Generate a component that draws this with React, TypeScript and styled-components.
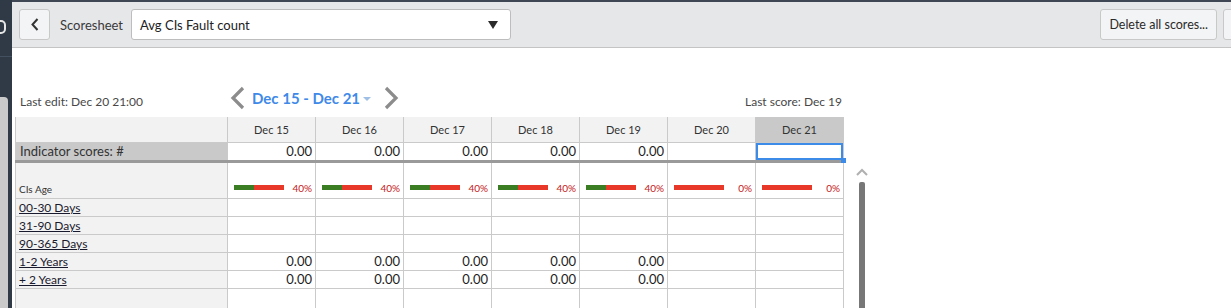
import React from "react";
import styled, { createGlobalStyle } from "styled-components";

const GlobalStyle = createGlobalStyle`
  html, body {
    margin: 0;
    padding: 0;
    background: #ffffff;
    font-family: Lato, "Noto Sans", "Liberation Sans", sans-serif;
    color: #2e2e2e;
  }
`;

const DAYS = ["Dec 15", "Dec 16", "Dec 17", "Dec 18", "Dec 19", "Dec 20", "Dec 21"];
const INDICATOR = ["0.00", "0.00", "0.00", "0.00", "0.00", "", ""];
const PROGRESS = [40, 40, 40, 40, 40, 0, 0];

type Row = { label: string; values: string[] };
const ROWS: Row[] = [
  { label: "00-30 Days", values: ["", "", "", "", "", "", ""] },
  { label: "31-90 Days", values: ["", "", "", "", "", "", ""] },
  { label: "90-365 Days", values: ["", "", "", "", "", "", ""] },
  { label: "1-2 Years", values: ["0.00", "0.00", "0.00", "0.00", "0.00", "", ""] },
  { label: "+ 2 Years", values: ["0.00", "0.00", "0.00", "0.00", "0.00", "", ""] },
];

const BackChevron = () => (
  <svg width="8" height="13" viewBox="0 0 8 13" fill="none">
    <path d="M6.5 1 L1.5 6.5 L6.5 12" stroke="#333" strokeWidth="2" />
  </svg>
);

const NavChevron = ({ dir }: { dir: "left" | "right" }) => (
  <svg width="16" height="24" viewBox="0 0 16 24" fill="none">
    <path
      d={dir === "left" ? "M13 2 L3 12 L13 22" : "M3 2 L13 12 L3 22"}
      stroke="#8c8c8c"
      strokeWidth="3.2"
    />
  </svg>
);

export default function App() {
  return (
    <>
      <GlobalStyle />
      <Page>
        <SideRail>
          <RailTop>
            <RailMark />
          </RailTop>
          <RailThumb />
        </SideRail>
        <Main>
          <Toolbar>
            <BackButton>
              <BackChevron />
            </BackButton>
            <ToolLabel>Scoresheet</ToolLabel>
            <Select>
              <span>Avg CIs Fault count</span>
              <Caret />
            </Select>
            <Spacer />
            <ToolButton>Delete all scores...</ToolButton>
            <ToolButton $cut />
          </Toolbar>
          <Content>
            <SheetArea>
              <InfoRow>
                <LastEdit>Last edit: Dec 20 21:00</LastEdit>
                <DateNav>
                  <NavChevron dir="left" />
                  <DateRange>Dec 15 - Dec 21</DateRange>
                  <SmallCaret />
                  <NavChevron dir="right" />
                </DateNav>
                <Spacer />
                <LastScore>Last score: Dec 19</LastScore>
              </InfoRow>
              <Sheet>
                <colgroup>
                  <col style={{ width: 212 }} />
                  {DAYS.map((d) => (
                    <col key={d} style={{ width: 88 }} />
                  ))}
                </colgroup>
                <tbody>
                  <HeadRow>
                    <HeadCell />
                    {DAYS.map((d, i) => (
                      <HeadCell key={d} $current={i === 6}>
                        {d}
                      </HeadCell>
                    ))}
                  </HeadRow>
                  <IndicatorRow>
                    <IndicatorLabel>Indicator scores: #</IndicatorLabel>
                    {INDICATOR.map((v, i) => (
                      <IndicatorValue key={i} $selected={i === 6}>
                        {v}
                        {i === 6 && <Handle />}
                      </IndicatorValue>
                    ))}
                  </IndicatorRow>
                  <GroupRow>
                    <GroupLabel>CIs Age</GroupLabel>
                    {PROGRESS.map((p, i) => (
                      <ProgressCell key={i}>
                        <ProgressInner>
                          <Bar>
                            <BarFill style={{ width: `${p}%` }} />
                          </Bar>
                          <Percent>{p}%</Percent>
                        </ProgressInner>
                      </ProgressCell>
                    ))}
                  </GroupRow>
                  {ROWS.map((r) => (
                    <BodyRow key={r.label}>
                      <RowLabel>
                        <LabelLink>{r.label}</LabelLink>
                      </RowLabel>
                      {r.values.map((v, i) => (
                        <ValueCell key={i}>{v}</ValueCell>
                      ))}
                    </BodyRow>
                  ))}
                  <EmptyRow>
                    <RowLabel />
                    {DAYS.map((d) => (
                      <ValueCell key={d} />
                    ))}
                  </EmptyRow>
                </tbody>
              </Sheet>
            </SheetArea>
            <ScrollColumn>
              <ScrollUp>
                <svg width="12" height="8" viewBox="0 0 12 8" fill="none">
                  <path d="M1 7 L6 2 L11 7" stroke="#b0b0b0" strokeWidth="2" />
                </svg>
              </ScrollUp>
              <ScrollThumb />
            </ScrollColumn>
          </Content>
        </Main>
      </Page>
    </>
  );
}

const Page = styled.div`
  display: flex;
  width: 1231px;
  height: 308px;
  overflow: hidden;
`;

const SideRail = styled.div`
  width: 12px;
  flex-shrink: 0;
  background: #2f3a46;
  display: flex;
  flex-direction: column;
`;

const RailTop = styled.div`
  height: 56px;
  border-bottom: 1px solid #435060;
  overflow: hidden;
  display: flex;
  align-items: center;
`;

const RailMark = styled.div`
  width: 6px;
  height: 10px;
  margin-left: -2px;
  margin-top: -2px;
  border: 2px solid #e6e6e6;
  border-left: none;
  border-radius: 0 5px 5px 0;
`;

const RailThumb = styled.div`
  margin-top: 40px;
  width: 8px;
  flex: 1;
  background: #cacaca;
  border-radius: 0 4px 0 0;
`;

const Main = styled.div`
  flex: 1;
  display: flex;
  flex-direction: column;
  min-width: 0;
`;

const Toolbar = styled.div`
  height: 45px;
  border-top: 2px solid #3e4753;
  border-bottom: 1px solid #c4c4c4;
  background: #e6e7e9;
  display: flex;
  align-items: center;
  padding-left: 7px;
  flex-shrink: 0;
`;

const BackButton = styled.div`
  width: 31px;
  height: 31px;
  box-sizing: border-box;
  border: 1px solid #c8c8c8;
  border-radius: 3px;
  background: #f3f4f5;
  display: flex;
  align-items: center;
  justify-content: center;
`;

const ToolLabel = styled.span`
  margin-left: 10px;
  font-size: 13px;
  color: #3a3a3a;
`;

const Select = styled.div`
  margin-left: 8px;
  width: 380px;
  height: 31px;
  box-sizing: border-box;
  border: 1px solid #bdbdbd;
  border-radius: 3px;
  background: #ffffff;
  display: flex;
  align-items: center;
  justify-content: space-between;
  padding: 0 12px 0 8px;
  font-size: 13px;
  color: #222;
`;

const Caret = styled.span`
  width: 0;
  height: 0;
  border-left: 5px solid transparent;
  border-right: 5px solid transparent;
  border-top: 8px solid #2a2a2a;
`;

const Spacer = styled.div`
  flex: 1;
`;

const ToolButton = styled.div<{ $cut?: boolean }>`
  height: 31px;
  box-sizing: border-box;
  border: 1px solid #c8c8c8;
  border-radius: 3px;
  background: #f3f4f5;
  display: flex;
  align-items: center;
  padding: 0 8px;
  font-size: 12.5px;
  color: #2a2a2a;
  margin-left: ${(p) => (p.$cut ? "6px" : "0")};
  width: ${(p) => (p.$cut ? "20px" : "auto")};
  margin-right: ${(p) => (p.$cut ? "-12px" : "0")};
  flex-shrink: 0;
`;

const Content = styled.div`
  flex: 1;
  display: flex;
  padding-left: 3px;
  min-height: 0;
`;

const SheetArea = styled.div`
  width: 828px;
  display: flex;
  flex-direction: column;
`;

const InfoRow = styled.div`
  height: 69px;
  flex-shrink: 0;
  display: flex;
  align-items: flex-end;
  padding: 0 1px 6px 5px;
  box-sizing: border-box;
`;

const LastEdit = styled.span`
  width: 210px;
  font-size: 12px;
  color: #474747;
  padding-bottom: 2px;
`;

const DateNav = styled.div`
  display: flex;
  align-items: center;
  gap: 6px;
  margin-bottom: 1px;
`;

const DateRange = styled.span`
  font-size: 15px;
  font-weight: 700;
  color: #3f8ae8;
`;

const SmallCaret = styled.span`
  width: 0;
  height: 0;
  border-left: 4px solid transparent;
  border-right: 4px solid transparent;
  border-top: 4px solid #9fbfe6;
  margin: 2px 6px 0 -3px;
`;

const LastScore = styled.span`
  font-size: 12px;
  color: #474747;
  padding-bottom: 2px;
`;

const Sheet = styled.table`
  border-collapse: collapse;
  table-layout: fixed;
  width: 828px;
  border-left: 1px solid #8a8a8a;
  font-size: 12px;
`;

const cellBorder = `border: 1px solid #cacaca;`;

const HeadRow = styled.tr`
  height: 25px;
`;

const HeadCell = styled.td<{ $current?: boolean }>`
  ${cellBorder}
  border-top: none;
  background: ${(p) => (p.$current ? "#c9c9c9" : "#f2f2f2")};
  text-align: center;
  font-size: 11px;
  color: #333;
  padding: 0;
`;

const IndicatorRow = styled.tr`
  height: 19px;
`;

const IndicatorLabel = styled.td`
  ${cellBorder}
  border-bottom: 3px solid #9a9a9a;
  background: #c9c9c9;
  font-size: 13px;
  color: #333;
  padding: 0 4px;
`;

const ValueCell = styled.td`
  ${cellBorder}
  text-align: right;
  font-size: 13px;
  color: #1e1e1e;
  padding: 0 3px;
`;

const IndicatorValue = styled(ValueCell)<{ $selected?: boolean }>`
  border-bottom: 3px solid #9a9a9a;
  position: relative;
  box-shadow: ${(p) => (p.$selected ? "inset 0 0 0 2px #3d8be8" : "none")};
`;

const Handle = styled.span`
  position: absolute;
  right: -3px;
  bottom: -3px;
  width: 5px;
  height: 5px;
  background: #3d8be8;
`;

const GroupRow = styled.tr`
  height: 37px;
`;

const GroupLabel = styled.td`
  ${cellBorder}
  background: #f2f2f2;
  font-size: 10px;
  color: #333;
  vertical-align: bottom;
  padding: 0 3px 3px;
`;

const ProgressCell = styled.td`
  ${cellBorder}
  vertical-align: bottom;
  padding: 0 3px 4px 6px;
`;

const ProgressInner = styled.div`
  display: flex;
  align-items: center;
  justify-content: space-between;
`;

const Bar = styled.div`
  width: 50px;
  height: 5px;
  background: #e8382a;
  display: flex;
`;

const BarFill = styled.div`
  height: 100%;
  background: #3a7d22;
`;

const Percent = styled.span`
  font-size: 10px;
  color: #c42020;
`;

const BodyRow = styled.tr`
  height: 18px;
`;

const EmptyRow = styled.tr`
  height: 24px;
`;

const RowLabel = styled.td`
  ${cellBorder}
  background: #f2f2f2;
  padding: 0 3px;
`;

const LabelLink = styled.span`
  font-size: 12px;
  color: #1a1a2e;
  text-decoration: underline;
`;

const ScrollColumn = styled.div`
  width: 30px;
  display: flex;
  flex-direction: column;
  align-items: center;
  padding-top: 120px;
  margin-left: 4px;
`;

const ScrollUp = styled.div`
  height: 14px;
  display: flex;
  align-items: flex-start;
`;

const ScrollThumb = styled.div`
  width: 6px;
  flex: 1;
  background: #777777;
  border-radius: 2px 2px 0 0;
`;
